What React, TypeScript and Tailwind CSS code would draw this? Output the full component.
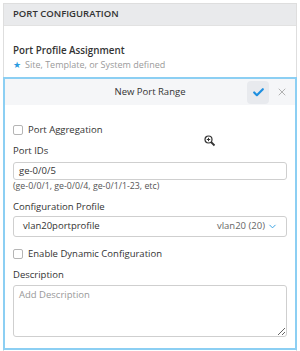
import { ChevronDown, Check, X } from 'lucide-react';

function Box() {
  return <span className="w-[10px] h-[10px] border border-[#b5b5b5] rounded-[2px] bg-white shrink-0" />;
}

export default function App() {
  return (
    <div className="w-[300px] h-[351px] bg-white pt-[3px] px-[3px] overflow-hidden relative font-['Open_Sans',sans-serif] text-[#333]">
      <div className="border border-[#dedede] border-b-0 h-[348px] flex flex-col">
        <div className="h-[22px] bg-[#e9eaec] border-b border-[#e2e2e2] pl-[9px] flex items-center text-[9.5px] font-semibold">PORT CONFIGURATION</div>
        <div className="pt-[18px] pl-[9px]">
          <p className="text-[9.8px] leading-[14px] font-semibold">Port Profile Assignment</p>
          <p className="mt-[1px] text-[9px] leading-[12px] text-[#9a9a9a] flex items-center gap-[4px]">
            <span className="text-[#2b9be0] text-[9px]">★</span>Site, Template, or System defined
          </p>
        </div>
        <div className="mt-[6px] -mx-px border-2 border-[#8ccff3] flex flex-col">
          <div className="h-[26px] bg-[#f5f6f8] grid grid-cols-[1fr_auto_1fr] items-center">
            <span />
            <span className="text-[9.5px] font-medium">New Port Range</span>
            <div className="flex justify-end items-center gap-[7px] pr-[7px]">
              <span className="w-[22px] h-[23px] rounded-[4px] bg-[#e8eaee] flex items-center justify-center">
                <Check size={13} strokeWidth={4} className="text-[#1d8fe0]" />
              </span>
              <X size={12} strokeWidth={1.5} className="text-[#999]" />
            </div>
          </div>
          <div className="px-[8px] pt-[18px] pb-[11px] text-[9.5px]">
            <label className="flex items-center gap-[5px] h-[14px]"><Box />Port Aggregation</label>
            <p className="mt-[7px] leading-[14px]">Port IDs</p>
            <div className="mt-[4px] h-[18px] border border-[#cfcfcf] rounded-[3px] pl-[5px] flex items-center">ge-0/0/5</div>
            <p className="text-[8.8px] leading-[12px] text-[#555]">(ge-0/0/1, ge-0/0/4, ge-0/1/1-23, etc)</p>
            <p className="mt-[8px] leading-[14px]">Configuration Profile</p>
            <div className="mt-[2px] h-[21px] border border-[#cfcfcf] rounded-[3px] pl-[9px] pr-[8px] flex items-center">
              <span className="flex-1">vlan20portprofile</span>
              <span className="text-[#666]">vlan20 (20)</span>
              <ChevronDown size={11} strokeWidth={2} className="ml-[2px] text-[#2b9be0]" />
            </div>
            <label className="mt-[10px] flex items-center gap-[5px] h-[14px]"><Box />Enable Dynamic Configuration</label>
            <p className="mt-[7px] leading-[14px]">Description</p>
            <textarea
              placeholder="Add Description"
              className="mt-[3px] block w-full h-[52px] border border-[#cfcfcf] rounded-[3px] px-[5px] py-[2px] text-[9.5px] placeholder:text-[#999] outline-none"
            />
          </div>
        </div>
      </div>
      <svg className="absolute left-[204px] top-[135px]" width="12" height="12" viewBox="0 0 12 12">
        <circle cx="4.5" cy="4.5" r="3.5" fill="white" stroke="#333" strokeWidth="1.2" />
        <path d="M4.5 2.8v3.4M2.8 4.5h3.4" stroke="#333" strokeWidth="1" />
        <path d="M7 7l3.5 3.5" stroke="#333" strokeWidth="1.8" />
      </svg>
    </div>
  );
}
